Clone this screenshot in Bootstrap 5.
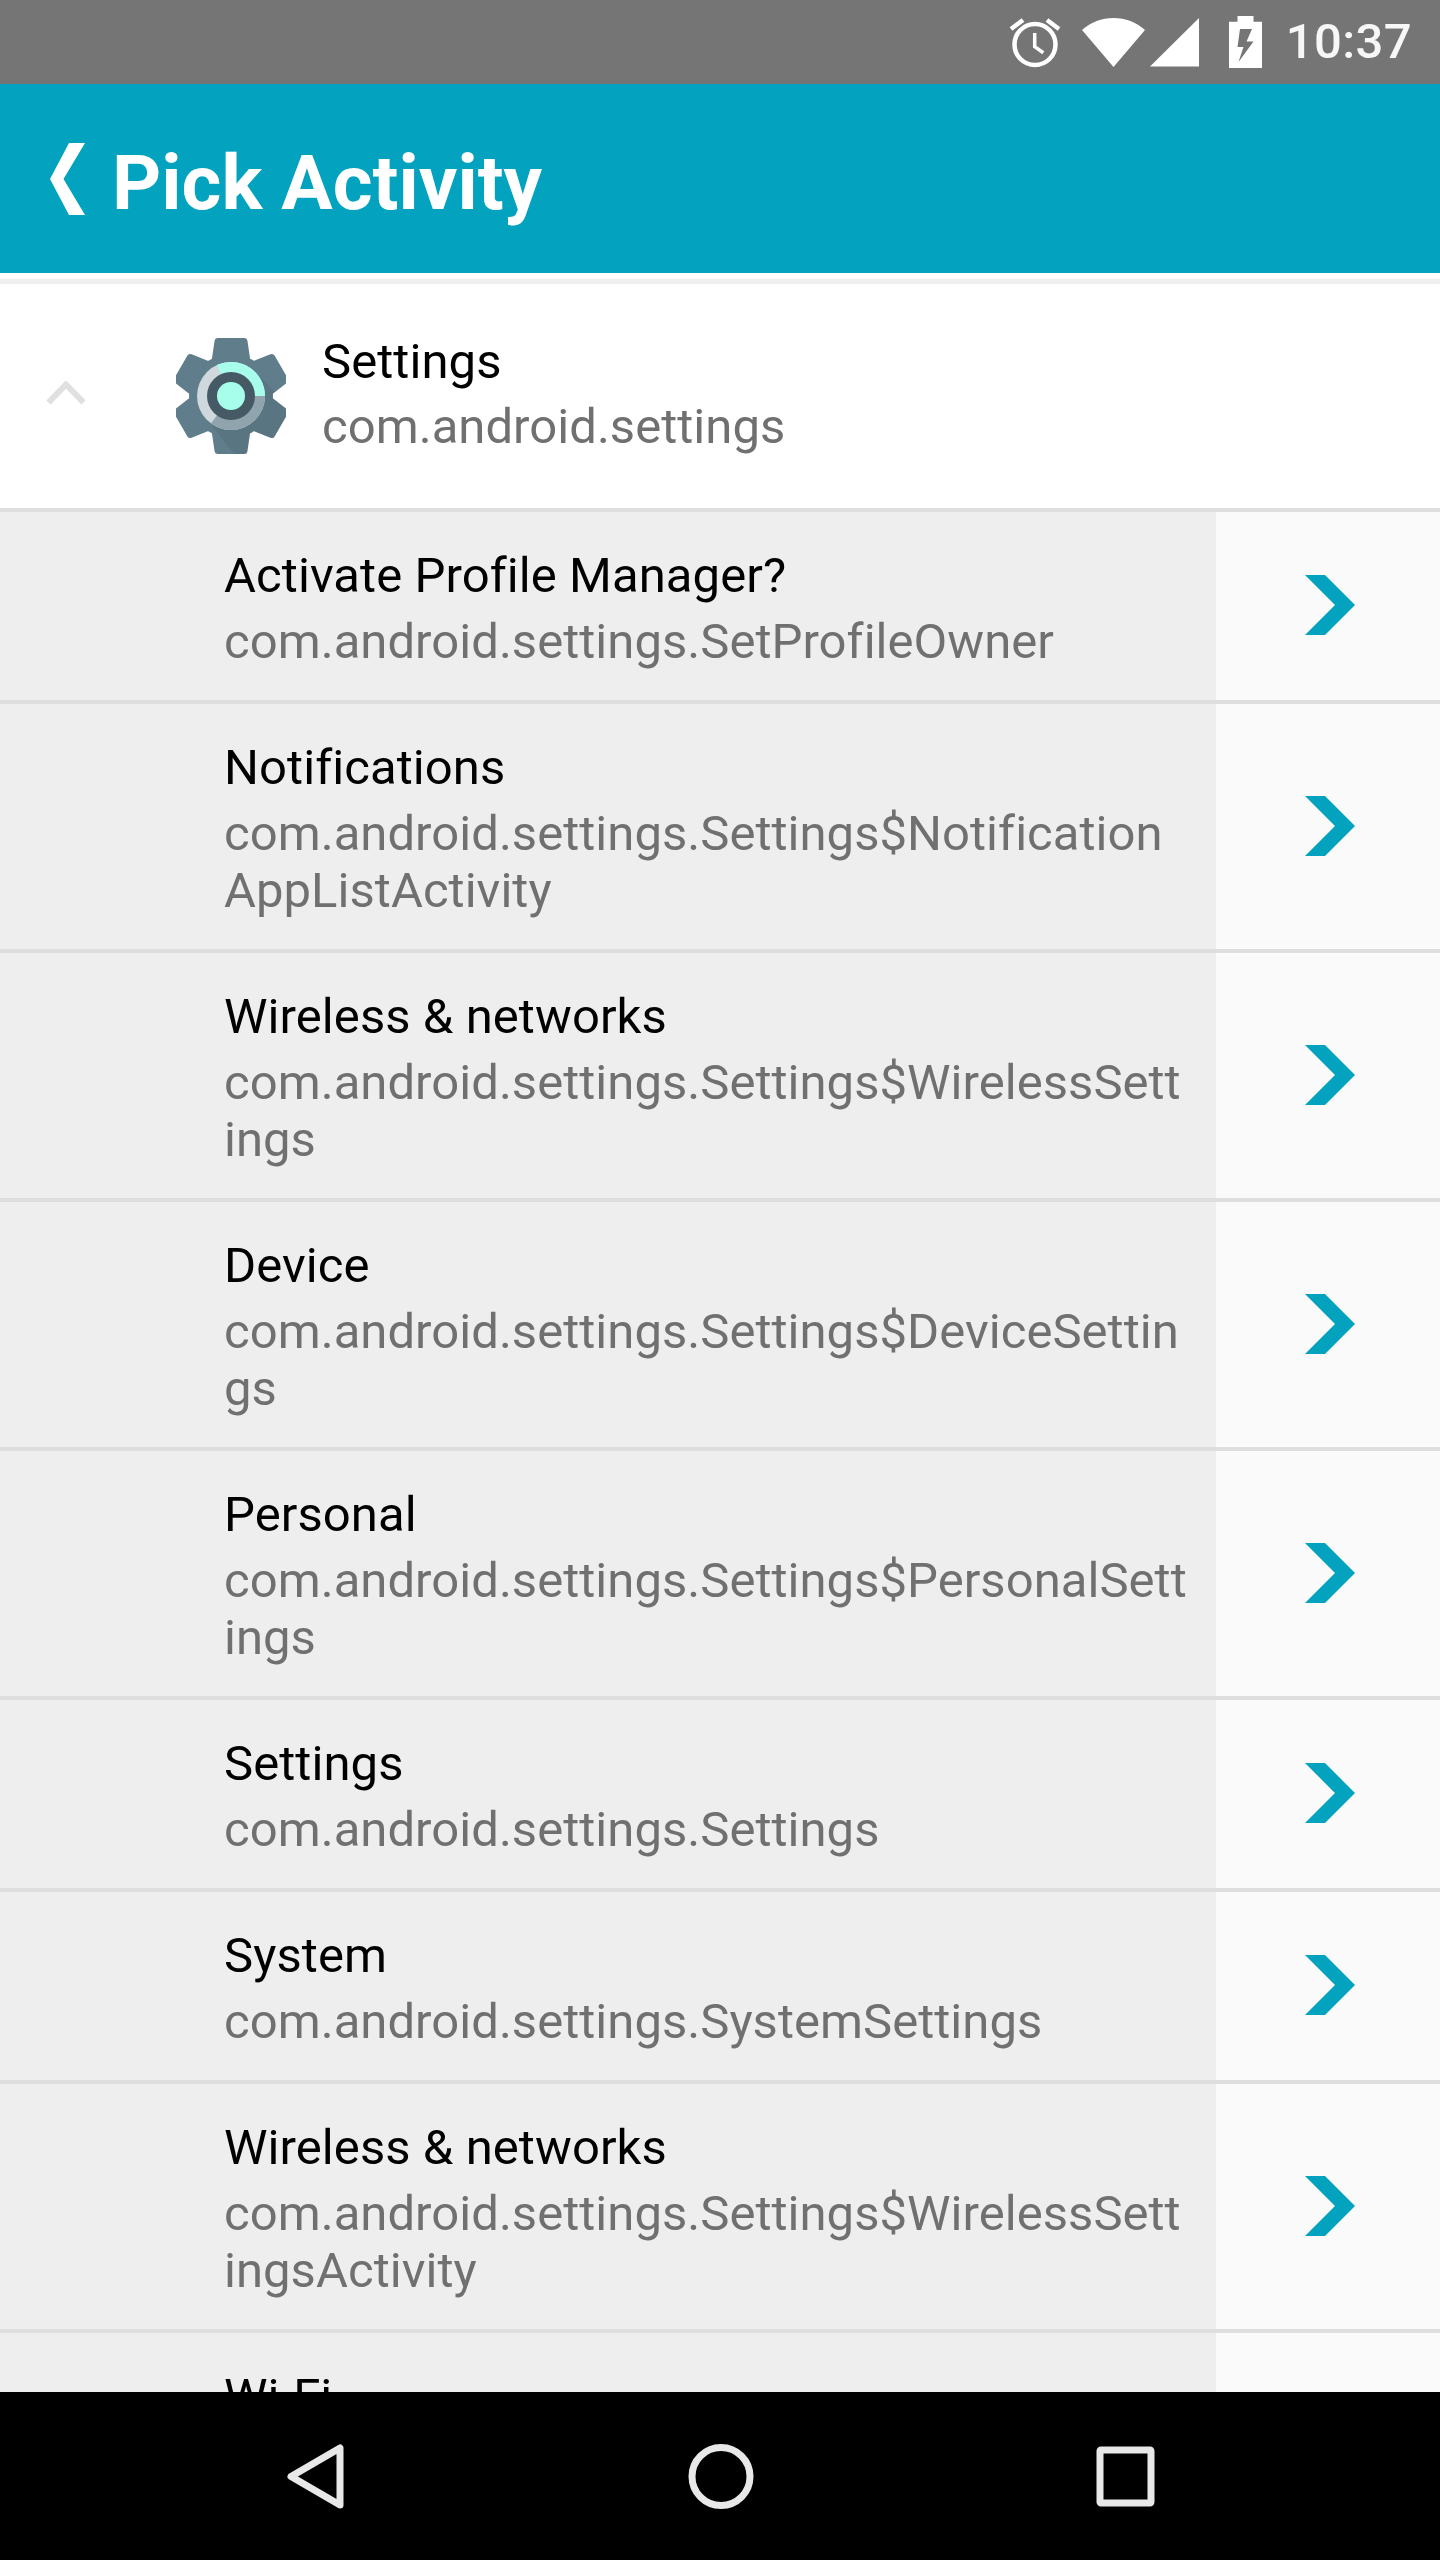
<!DOCTYPE html>
<html lang="en">
<head>
<meta charset="utf-8">
<title>Pick Activity</title>
<link href="https://cdn.jsdelivr.net/npm/bootstrap@5.3.0/dist/css/bootstrap.min.css" rel="stylesheet">
<style>
html,body{width:1440px;height:2560px;overflow:hidden;background:#fff;font-family:Roboto,"Liberation Sans",sans-serif;}
.phone{width:1440px;height:2560px;}
.status-strip{flex:none;height:84px;background:#757575;color:#f7f7f7;font-size:49px;font-weight:500;line-height:84px;padding-right:28px;}
.status-strip svg{display:block;flex:none;}
.gap-wifi{margin-left:21px;}
.gap-signal{margin-left:3px;}
.gap-batt{margin-left:28px;}
.clock-text{margin-left:24px;letter-spacing:.4px;}
.app-strip{flex:none;height:189px;background:#03a2bf;color:#fff;padding-left:50px;}
.app-title{font-size:76.500px;font-weight:700;line-height:1;margin:9px 0 0 27px;}
.top-gap{flex:none;height:6px;background:#fff;}
.sep-light{flex:none;height:5px;background:#eeeeee;}
.app-head{flex:none;height:224px;background:#fff;padding-left:46px;}
.chev-up{flex:none;margin-bottom:6px;}
.gear-img{margin-left:90px;margin-right:36px;flex:none;}
.head-text{padding-bottom:4px;}
.line-a{font-size:49px;line-height:57px;color:#000;letter-spacing:.08px;margin-bottom:8px;}
.line-b{font-size:49px;line-height:57px;color:#707070;letter-spacing:.04px;word-break:break-all;}
.entries{min-height:0;overflow:hidden;background:#eee;}
.entry{border-top:4px solid #dedede;background:#eeeeee;}
.entry-text{padding:35px 24px 30px 224px;width:1216px;flex:none;}
.entry-text .line-a{margin-bottom:9px;}
.entry-go{width:224px;background:#fafafa;flex:none;padding-left:3px;padding-bottom:2px;}
.nav-strip{flex:none;height:168px;background:#000;}
</style>
</head>
<body>
<div class="phone d-flex flex-column">
  <div class="status-strip d-flex justify-content-end align-items-center">
    <svg width="52" height="54" viewBox="0 0 52 54" fill="none" stroke="#fff" stroke-width="4.500"><circle cx="26" cy="29.500" r="20.500"/><path d="M25.700 18V31.700L34.300 37.700" stroke-width="3.500"/><path d="M2 14 14 5M50 14 38 5"/></svg>
    <svg class="gap-wifi" width="64" height="50" viewBox="0 0 64 50"><path fill="#fff" d="M31.500 50 0 13C9 5.200 19.500 1 31.500 1S54 5.200 63 13Z"/></svg>
    <svg class="gap-signal" width="52" height="50" viewBox="0 0 52 50"><path fill="#fff" d="M1 49.500 50 1V49.500Z"/></svg>
    <svg class="gap-batt" width="33" height="52" viewBox="0 0 33 52"><path fill="#fff" d="M8.500 0H24.500V5.700H33V52H0V5.700H8.500Z"/><path fill="#757575" d="M11 13H23L17.500 25.500H24.500L9.500 46 14.500 31H8.500Z"/></svg>
    <span class="clock-text">10:37</span>
  </div>
  <div class="app-strip d-flex align-items-center">
    <svg width="35" height="72" viewBox="0 0 35 72"><path fill="#fff" d="M19 0H35L13.500 36 35 72H19L0 36Z"/></svg>
    <h1 class="app-title">Pick Activity</h1>
  </div>
  <div class="top-gap"></div>
  <div class="sep-light"></div>
  <div class="app-head d-flex align-items-center">
    <svg class="chev-up" width="40" height="24" viewBox="0 0 40 24"><path d="M2.500 21.500 20 3.500 37.500 21.500" fill="none" stroke="#e0e0e0" stroke-width="6"/></svg>
    <svg class="gear-img" width="110" height="118" viewBox="0 0 110 118">
      <defs>
        <polygon id="cog" points="42,3.500 68,3.500 71,24 39,24" fill="#607d8b" stroke="#607d8b" stroke-width="7" stroke-linejoin="round"/>
        <clipPath id="gear-clip">
          <circle cx="55" cy="58" r="42"/>
          <polygon points="39,0 71,0 74,24 36,24"/>
          <polygon points="39,0 71,0 74,24 36,24" transform="rotate(60 55 58)"/>
          <polygon points="39,0 71,0 74,24 36,24" transform="rotate(120 55 58)"/>
          <polygon points="39,0 71,0 74,24 36,24" transform="rotate(180 55 58)"/>
        </clipPath>
      </defs>
      <g transform="translate(0,1)">
      <circle cx="55" cy="58" r="42" fill="#607d8b"/>
      <use href="#cog"/>
      <use href="#cog" transform="rotate(60 55 58)"/>
      <use href="#cog" transform="rotate(120 55 58)"/>
      <use href="#cog" transform="rotate(180 55 58)"/>
      <use href="#cog" transform="rotate(240 55 58)"/>
      <use href="#cog" transform="rotate(300 55 58)"/>
      <path d="M79 34 112 67V118H60L31 82Z" fill="#263238" opacity=".1" clip-path="url(#gear-clip)"/>
      <circle cx="55" cy="58" r="34" fill="#cfd8dc"/>
      <path d="M55 58 41 27A34 34 0 0 1 89 58Z" fill="#a7ffeb"/>
      <path d="M55 58H89A34 34 0 0 1 35 85.500Z" fill="#90a4ae"/>
      <circle cx="55" cy="58" r="24" fill="#455a64"/>
      <circle cx="55" cy="58" r="14" fill="#a7ffeb"/>
      </g>
    </svg>
    <div class="head-text">
      <div class="line-a">Settings</div>
      <div class="line-b">com.android.settings</div>
    </div>
  </div>
  <div class="entries flex-grow-1" id="entries">
    <div class="entry d-flex"><div class="entry-text"><div class="line-a">Activate Profile Manager?</div><div class="line-b">com.android.settings.SetProfileOwner</div></div><div class="entry-go d-flex align-items-center justify-content-center"><svg width="50" height="60" viewBox="0 0 50 60"><path fill="#03a2bf" d="M0 0H20L50 30 20 60H0L30 30Z"/></svg></div></div>
    <div class="entry d-flex"><div class="entry-text"><div class="line-a">Notifications</div><div class="line-b">com.android.settings.Settings$NotificationAppListActivity</div></div><div class="entry-go d-flex align-items-center justify-content-center"><svg width="50" height="60" viewBox="0 0 50 60"><path fill="#03a2bf" d="M0 0H20L50 30 20 60H0L30 30Z"/></svg></div></div>
    <div class="entry d-flex"><div class="entry-text"><div class="line-a">Wireless &amp; networks</div><div class="line-b">com.android.settings.Settings$WirelessSettings</div></div><div class="entry-go d-flex align-items-center justify-content-center"><svg width="50" height="60" viewBox="0 0 50 60"><path fill="#03a2bf" d="M0 0H20L50 30 20 60H0L30 30Z"/></svg></div></div>
    <div class="entry d-flex"><div class="entry-text"><div class="line-a">Device</div><div class="line-b">com.android.settings.Settings$DeviceSettings</div></div><div class="entry-go d-flex align-items-center justify-content-center"><svg width="50" height="60" viewBox="0 0 50 60"><path fill="#03a2bf" d="M0 0H20L50 30 20 60H0L30 30Z"/></svg></div></div>
    <div class="entry d-flex"><div class="entry-text"><div class="line-a">Personal</div><div class="line-b">com.android.settings.Settings$PersonalSettings</div></div><div class="entry-go d-flex align-items-center justify-content-center"><svg width="50" height="60" viewBox="0 0 50 60"><path fill="#03a2bf" d="M0 0H20L50 30 20 60H0L30 30Z"/></svg></div></div>
    <div class="entry d-flex"><div class="entry-text"><div class="line-a">Settings</div><div class="line-b">com.android.settings.Settings</div></div><div class="entry-go d-flex align-items-center justify-content-center"><svg width="50" height="60" viewBox="0 0 50 60"><path fill="#03a2bf" d="M0 0H20L50 30 20 60H0L30 30Z"/></svg></div></div>
    <div class="entry d-flex"><div class="entry-text"><div class="line-a">System</div><div class="line-b">com.android.settings.SystemSettings</div></div><div class="entry-go d-flex align-items-center justify-content-center"><svg width="50" height="60" viewBox="0 0 50 60"><path fill="#03a2bf" d="M0 0H20L50 30 20 60H0L30 30Z"/></svg></div></div>
    <div class="entry d-flex"><div class="entry-text"><div class="line-a">Wireless &amp; networks</div><div class="line-b">com.android.settings.Settings$WirelessSettingsActivity</div></div><div class="entry-go d-flex align-items-center justify-content-center"><svg width="50" height="60" viewBox="0 0 50 60"><path fill="#03a2bf" d="M0 0H20L50 30 20 60H0L30 30Z"/></svg></div></div>
    <div class="entry d-flex"><div class="entry-text"><div class="line-a">Wi-Fi</div><div class="line-b">com.android.settings.Settings$WifiSettings</div></div><div class="entry-go d-flex align-items-center justify-content-center"><svg width="50" height="60" viewBox="0 0 50 60"><path fill="#03a2bf" d="M0 0H20L50 30 20 60H0L30 30Z"/></svg></div></div>
  </div>
  <div class="nav-strip d-flex align-items-center justify-content-center">
    <svg width="1440" height="168" viewBox="0 0 1440 168" fill="none" stroke="#e8e8e8" stroke-width="7" stroke-linejoin="round">
      <path d="M340 56V113L291 84.500Z"/>
      <circle cx="721" cy="84.500" r="29"/>
      <rect x="1100" y="58" width="51" height="53" rx="1"/>
    </svg>
  </div>
</div>
<script src="https://cdn.jsdelivr.net/npm/bootstrap@5.3.0/dist/js/bootstrap.bundle.min.js"></script>
</body>
</html>
